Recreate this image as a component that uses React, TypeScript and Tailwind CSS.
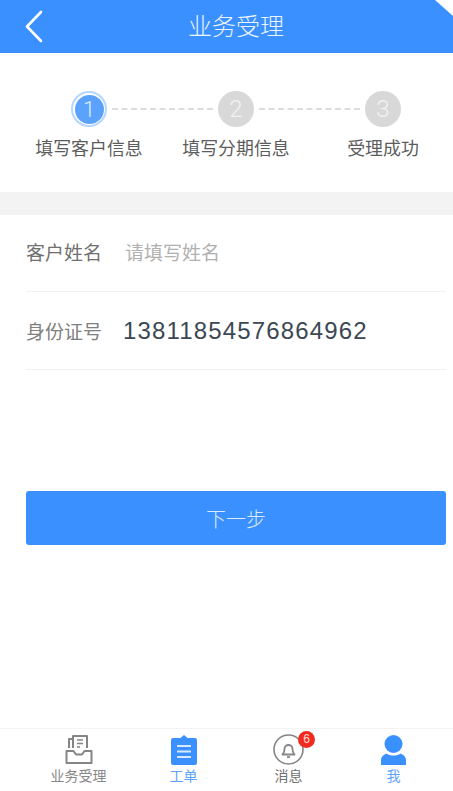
const STEPS = [
  { n: 1, label: '填写客户信息' },
  { n: 2, label: '填写分期信息' },
  { n: 3, label: '受理成功' },
];

function Dashes() {
  return <div className="flex-1 mx-[5px] border-t-2 border-dashed border-[#dcdcdc]" />;
}

function BackIcon() {
  return (
    <svg width="20" height="34" viewBox="0 0 20 34" fill="none" stroke="#fff" strokeWidth="2.6" strokeLinecap="round" strokeLinejoin="round">
      <path d="M17 2 L3 16.500 L17 31" />
    </svg>
  );
}

function InboxIcon() {
  return (
    <svg width="28" height="31" viewBox="0 0 28 31" fill="none" stroke="#858585" strokeWidth="2" strokeLinejoin="round">
      <path d="M4 14V5h4" />
      <path d="M8 14V2h14v12" />
      <path d="M12 6h6M12 9.500h6M12 13h3" strokeWidth="1.500" />
      <path d="M1.500 17h7l2.500 3.500h6l2.500-3.500h7v12h-25z" fill="#fff" />
    </svg>
  );
}

function ClipboardIcon() {
  return (
    <svg width="26" height="30" viewBox="0 0 26 30">
      <path d="M2 3h7.500l3.500-3 3.500 3H24a2 2 0 0 1 2 2v23a2 2 0 0 1-2 2H2a2 2 0 0 1-2-2V5a2 2 0 0 1 2-2z" fill="#3a90ff" />
      <path d="M6 11h14M6 16.500h14M6 22h14" stroke="#d8e9ff" strokeWidth="1.800" />
    </svg>
  );
}

function BellIcon() {
  return (
    <svg width="31" height="31" viewBox="0 0 31 31" fill="none" stroke="#858585">
      <circle cx="15.500" cy="15.500" r="14.500" strokeWidth="1.600" />
      <path d="M9.500 20.500c1.500-1.500 2-3 2-5.500a4 4 0 0 1 8 0c0 2.500.5 4 2 5.500z" strokeWidth="1.800" strokeLinejoin="round" />
      <path d="M14 23h3" strokeWidth="1.800" />
    </svg>
  );
}

function UserIcon() {
  return (
    <svg width="25" height="30" viewBox="0 0 25 30" fill="#3a90ff">
      <circle cx="12.500" cy="9" r="9" />
      <path d="M0 30v-5c0-3 2-5 5.500-6.500 2 1.500 4 2 7 2s5-.5 7-2C23 20 25 22 25 25v5z" />
    </svg>
  );
}

export default function App() {
  return (
    <div className="w-[453px] h-[791px] overflow-hidden bg-white">
      <div className="w-[472px] h-[791px] bg-white flex flex-col font-['Liberation_Sans','Noto_Sans_CJK_SC',sans-serif]">
        <header className="relative h-[53px] shrink-0 bg-[#3a90ff] flex items-center justify-center">
          <div className="absolute left-[24px] top-[10px]"><BackIcon /></div>
          <span className="text-[#eaf3ff] text-[24px] font-light">业务受理</span>
          <div className="absolute top-0 right-[19px] w-0 h-0 border-t-[16px] border-l-[18px] border-t-white border-l-transparent" />
        </header>

        <section className="h-[139px] shrink-0 pt-[38px] flex flex-col">
          <div className="flex items-center px-[71px] font-['Roboto',sans-serif] font-light">
            <div className="w-[36px] h-[36px] rounded-full border-2 border-[#b5d6ff] p-[1.500px] shrink-0">
              <div className="w-full h-full rounded-full bg-[#5aa2fb] text-[#dcebff] flex items-center justify-center text-[22px]">1</div>
            </div>
            <Dashes />
            <div className="w-[36px] h-[36px] rounded-full bg-[#d8d8d8] text-[#f2f2f2] flex items-center justify-center text-[24px] shrink-0">2</div>
            <Dashes />
            <div className="w-[36px] h-[36px] rounded-full bg-[#d8d8d8] text-[#f2f2f2] flex items-center justify-center text-[24px] shrink-0">3</div>
          </div>
          <div className="flex justify-center mt-[9px]">
            {STEPS.map(s => (
              <span key={s.n} className="w-[147px] text-center text-[17.900px] leading-[26px] text-[#5c5c5c]">{s.label}</span>
            ))}
          </div>
        </section>

        <div className="h-[23px] shrink-0 bg-[#f3f3f3]" />

        <div className="mx-[26px] h-[77px] shrink-0 flex items-center border-b border-[#f0f0f0]">
          <span className="w-[99px] pt-[2px] text-[19px] text-[#707070]">客户姓名</span>
          <span className="pt-[2px] text-[19px] text-[#b0b0b0]">请填写姓名</span>
        </div>
        <div className="mx-[26px] h-[78px] shrink-0 flex items-center border-b border-[#f0f0f0]">
          <span className="w-[97px] pt-[5px] text-[19px] text-[#808080]">身份证号</span>
          <span className="text-[24px] text-[#3b4753] tracking-[1.150px]">13811854576864962</span>
        </div>

        <button className="mx-[26px] mt-[121px] h-[54px] shrink-0 rounded-[3px] bg-[#3a90ff] pt-[3px] text-[#dcebff] text-[20px] font-light">下一步</button>

        <div className="flex-1" />

        <nav className="h-[63px] shrink-0 border-t border-[#f3f3f3] grid grid-cols-4 px-[26px] pt-[5px]">
          <div className="flex flex-col items-center text-[#888]">
            <div className="h-[31px] flex items-center"><InboxIcon /></div>
            <span className="text-[14px] leading-[20px] mt-[1px]">业务受理</span>
          </div>
          <div className="flex flex-col items-center text-[#5ea4ff]">
            <div className="h-[31px] flex items-center"><ClipboardIcon /></div>
            <span className="text-[14px] leading-[20px] mt-[1px]">工单</span>
          </div>
          <div className="flex flex-col items-center text-[#707070]">
            <div className="relative h-[31px] flex items-center">
              <BellIcon />
              <span className="absolute -top-[3px] -right-[11px] w-[17px] h-[17px] rounded-full bg-[#f02a20] text-[#ffdcd8] text-[12px] leading-[17px] text-center">6</span>
            </div>
            <span className="text-[14px] leading-[20px] mt-[1px]">消息</span>
          </div>
          <div className="flex flex-col items-center text-[#5ea4ff]">
            <div className="h-[31px] flex items-center"><UserIcon /></div>
            <span className="text-[14px] leading-[20px] mt-[1px]">我</span>
          </div>
        </nav>
      </div>
    </div>
  );
}
